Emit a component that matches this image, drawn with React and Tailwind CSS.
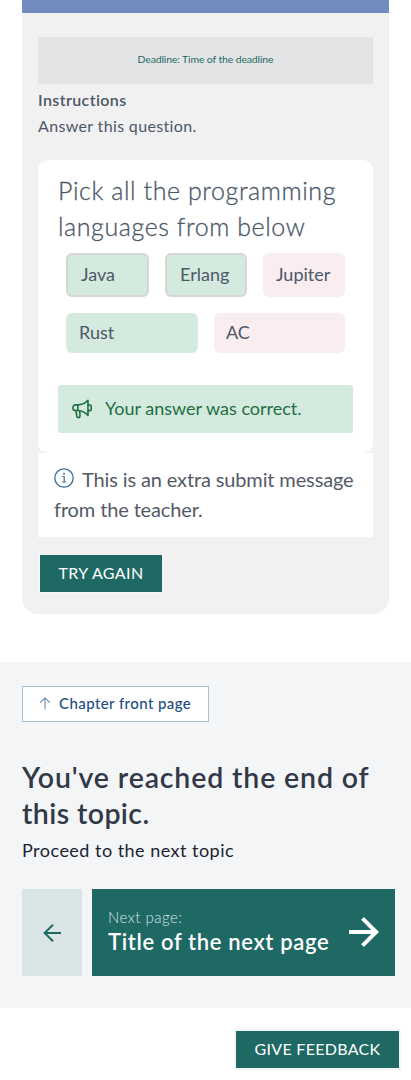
function Chip({ children, className }) {
  return (
    <div className={`flex items-center rounded-md pb-[2px] text-[18px] leading-6 ${className}`}>
      {children}
    </div>
  );
}

function MegaphoneIcon() {
  return (
    <svg className="h-5 w-5 shrink-0" viewBox="0 0 20 20" fill="none" stroke="#1f6f43" strokeWidth="1.6" strokeLinejoin="round" strokeLinecap="round">
      <path d="M5.8 5.9 H3.3 C1.8 5.9 .9 7 .9 8.7 S1.8 11.5 3.3 11.5 H5.8" />
      <path d="M5.8 5.9 C10 5.8 13.3 4.4 16 1.3 V16.5 C13.3 13.3 10 11.6 5.8 11.5 Z" />
      <path d="M16 6 H18 Q19.2 6 19.2 7.2 V10.4 Q19.2 11.6 18 11.6 H16" />
      <path d="M3.9 11.6 L4.8 17 Q5.2 18.8 6.9 18.6 Q8.2 18.3 8 16.8 L7.7 11.8" />
    </svg>
  );
}

function InfoIcon() {
  return (
    <svg className="mr-2 inline-block h-5 w-5 align-[-1px]" viewBox="0 0 20 20" fill="none" stroke="#376f9f">
      <circle cx="10" cy="10" r="9.2" strokeWidth="1.3" />
      <path d="M8.2 8.5 H10.2 V13.9 M8 14 H12.2" strokeWidth="1.2" />
      <circle cx="10" cy="5.8" r="1" fill="#376f9f" stroke="none" />
    </svg>
  );
}

export default function App() {
  return (
    <div className="flex h-[1080px] w-[411px] flex-col overflow-hidden bg-white font-['Lato',sans-serif] text-[#4c5868]">
      <main className="mx-[22px] h-[614px] overflow-hidden rounded-b-[16px] bg-[#f1f1f1]">
        <div className="h-[13px] bg-[#718dbf]" />
        <div className="px-4 pt-6">
          <div className="flex h-[47px] items-center justify-center bg-[#e2e4e6] pb-[2px] text-[10.4px] tracking-[-0.1px] text-[#1f6964]">
            Deadline: Time of the deadline
          </div>
          <div className="pt-[3px] leading-[26px] whitespace-nowrap">
            <h2 className="text-[16px] font-semibold tracking-[0.4px]">Instructions</h2>
            <p className="text-[16px] tracking-[0.35px]">Answer this question.</p>
          </div>

          <section className="mt-[21px] h-[293px] rounded-[10px] bg-white px-5 pt-3">
            <h1 className="text-[25px] leading-9 font-light tracking-[0.58px] whitespace-nowrap [-webkit-text-stroke:0.3px]">
              Pick all the programming
              <br />
              languages from below
            </h1>
            <div className="mt-[9px] flex gap-4 px-2">
              <Chip className="h-11 w-[83px] border-2 border-[#d6d6d6] bg-[#d4eadf] pl-[13px]">Java</Chip>
              <Chip className="h-11 w-[82px] border-2 border-[#d6d6d6] bg-[#d4eadf] pl-[13px]">Erlang</Chip>
              <Chip className="h-11 w-[82px] bg-[#f9edf0] pl-[13px]">Jupiter</Chip>
            </div>
            <div className="mt-4 flex gap-4 px-2">
              <Chip className="h-10 w-[132px] bg-[#d4eadf] pl-[13px]">Rust</Chip>
              <Chip className="h-10 w-[131px] bg-[#f9edf0] pl-3">AC</Chip>
            </div>
            <div className="mt-8 flex h-12 items-center gap-[13px] rounded-[3px] bg-[#d4eadf] px-[14px] text-[18px] text-[#1f6f43]">
              <MegaphoneIcon />
              <span className="pb-[2px] whitespace-nowrap">Your answer was correct.</span>
            </div>
          </section>

          <section className="h-[84px] bg-white px-4 pt-[11px] text-[20px] leading-[30px] tracking-[-0.13px] whitespace-nowrap text-[#535a66]">
            <InfoIcon />
            This is an extra submit message
            <br />
            from the teacher.
          </section>

          <button className="mt-4 flex h-[41px] w-[126px] items-center justify-center border-2 border-[#f3f5f7] bg-[#1f6964] pb-[2px] text-[16px] tracking-[0.4px] whitespace-nowrap text-white">
            TRY AGAIN
          </button>
        </div>
      </main>

      <section className="mt-12 h-[346px] bg-[#f4f5f7] px-[22px] pt-6 text-[#1a2333]">
        <button className="flex h-9 w-[187px] items-center border border-[#a9c0d4] bg-white pl-4 text-[15px] font-medium whitespace-nowrap text-[#1c4e80]">
          <svg className="mr-2 mb-[2px] h-[13px] w-3 shrink-0" viewBox="0 0 12 13" fill="none" stroke="#6d93b3" strokeWidth="1.1">
            <path d="M6 12.5 V1 M1.2 5.5 L6 1 L10.8 5.5" />
          </svg>
          <span className="pb-[2px] tracking-[0.42px]">Chapter front page</span>
        </button>
        <h2 className="mt-[37px] text-[28.5px] leading-9 font-semibold tracking-[0.85px] whitespace-nowrap text-[#313947]">
          You've reached the end of
          <br />
          <span className="tracking-[0.4px]">this topic.</span>
        </h2>
        <p className="mt-[7px] text-[18px] leading-6 tracking-[0.48px] whitespace-nowrap">Proceed to the next topic</p>
        <div className="mt-[27px] -mr-[6px] flex gap-[10px]">
          <button className="flex h-[87px] w-[60px] items-center justify-center bg-[#dae6e5]">
            <svg className="h-[18px] w-[18px]" viewBox="0 0 18 18" fill="none" stroke="#1f6964" strokeWidth="2">
              <path d="M18 9 H1.5 M10 .7 L1.6 9 L10 17.3" />
            </svg>
          </button>
          <a className="flex h-[87px] w-[303px] items-center justify-between bg-[#1f6964] pr-4 pb-[2px] pl-4 text-white">
            <div className="whitespace-nowrap">
              <div className="text-[15px] leading-5 font-light tracking-[0.48px] text-[#dae6e5]">Next page:</div>
              <div className="pt-px text-[22px] leading-[28px] font-semibold tracking-[0.66px]">Title of the next page</div>
            </div>
            <svg className="h-[30px] w-[30px] shrink-0" viewBox="0 0 30 30" fill="none" stroke="white" strokeWidth="4">
              <path d="M0 15 H27 M13.5 1.4 L27.2 15 L13.5 28.6" />
            </svg>
          </a>
        </div>
      </section>

      <button className="mt-[21px] mr-[10px] flex h-[41px] w-[167px] items-center justify-center self-end border-2 border-[#f3f5f7] bg-[#1f6964] pb-[2px] text-[16px] tracking-[0.3px] whitespace-nowrap text-white">
        GIVE FEEDBACK
      </button>
    </div>
  );
}
